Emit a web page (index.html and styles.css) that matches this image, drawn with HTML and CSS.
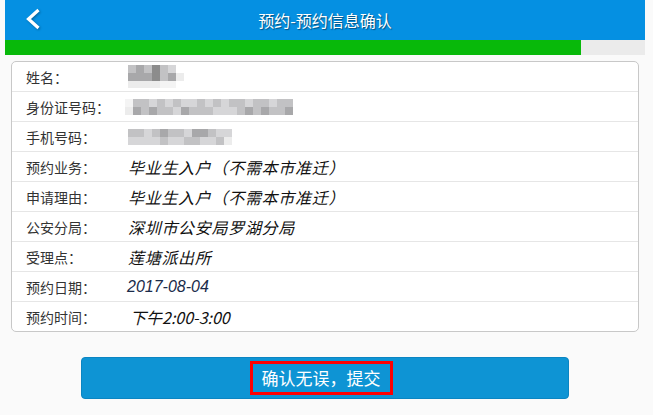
FILE: index.html
```html
<!DOCTYPE html>
<html lang="zh-CN">
<head>
    <meta charset="UTF-8">
    <meta name="viewport" content="width=device-width, initial-scale=1.0">
    <title>预约-预约信息确认</title>
    <link rel="stylesheet" href="styles.css">
</head>
<body>
    <div class="page">
        <div class="header">
            <a class="back" href="#">
                <svg width="18" height="22" viewBox="0 0 18 22">
                    <path d="M14.5 2 L4.5 11 L14.5 20" fill="none" stroke="#fff" stroke-width="3.2"/>
                </svg>
            </a>
            <h1>预约-预约信息确认</h1>
        </div>

        <div class="progress">
            <div class="progress-bar" style="width: 90%"></div>
        </div>

        <div class="info">
            <div class="row">
                <span class="label">姓名：</span>
                <span class="mosaic">
                    <span class="line"><i class="c3"></i><i class="c2"></i><i class="c3"></i><i class="c1"></i><i class="c3"></i><i class="c4"></i></span>
                    <span class="line"><i class="c2"></i><i class="c2"></i><i class="c2"></i><i class="c1"></i><i class="c3"></i><i class="c2"></i><i class="c5"></i></span>
                    <span class="line half"><i class="c5"></i><i class="c5"></i><i class="c5"></i><i class="c5"></i><i class="c6"></i><i class="c6"></i></span>
                </span>
            </div>
            <div class="row">
                <span class="label">身份证号码：</span>
                <span class="mosaic wide">
                    <span class="line"><i class="c6"></i><i class="c3"></i><i class="c3"></i><i class="c4"></i><i class="c3"></i><i class="c4"></i><i class="c3"></i><i class="c4"></i><i class="c4"></i><i class="c3"></i><i class="c4"></i><i class="c3"></i><i class="c4"></i><i class="c3"></i><i class="c3"></i><i class="c4"></i><i class="c3"></i><i class="c3"></i><i class="c4"></i><i class="c3"></i><i class="c3"></i></span>
                    <span class="line"><i class="c5"></i><i class="c2"></i><i class="c3"></i><i class="c2"></i><i class="c3"></i><i class="c3"></i><i class="c4"></i><i class="c2"></i><i class="c3"></i><i class="c3"></i><i class="c3"></i><i class="c4"></i><i class="c4"></i><i class="c4"></i><i class="c3"></i><i class="c2"></i><i class="c3"></i><i class="c2"></i><i class="c3"></i><i class="c3"></i><i class="c2"></i></span>
                </span>
            </div>
            <div class="row">
                <span class="label">手机号码：</span>
                <span class="mosaic">
                    <span class="line"><i class="c3"></i><i class="c3"></i><i class="c4"></i><i class="c3"></i><i class="c2"></i><i class="c3"></i><i class="c3"></i><i class="c4"></i><i class="c2"></i><i class="c2"></i><i class="c3"></i><i class="c4"></i><i class="c4"></i></span>
                    <span class="line"><i class="c4"></i><i class="c4"></i><i class="c4"></i><i class="c4"></i><i class="c3"></i><i class="c4"></i><i class="c4"></i><i class="c3"></i><i class="c3"></i><i class="c4"></i><i class="c4"></i><i class="c3"></i><i class="c5"></i></span>
                </span>
            </div>
            <div class="row">
                <span class="label">预约业务：</span>
                <span class="value">毕业生入户（不需本市准迁）</span>
            </div>
            <div class="row">
                <span class="label">申请理由：</span>
                <span class="value">毕业生入户（不需本市准迁）</span>
            </div>
            <div class="row">
                <span class="label">公安分局：</span>
                <span class="value">深圳市公安局罗湖分局</span>
            </div>
            <div class="row">
                <span class="label">受理点：</span>
                <span class="value">莲塘派出所</span>
            </div>
            <div class="row">
                <span class="label">预约日期：</span>
                <span class="value date">2017-08-04</span>
            </div>
            <div class="row">
                <span class="label">预约时间：</span>
                <span class="value time">下午2:00-3:00</span>
            </div>
        </div>

        <div class="actions">
            <button class="submit"><span class="focus">确认无误，提交</span></button>
        </div>
    </div>
</body>
</html>
```

FILE: styles.css
```css
body {
    margin: 0;
    background-color: #fafafa;
    font-family: "Noto Sans CJK SC", "Liberation Sans", sans-serif;
    color: #222;
}
.page {
    width: 640px;
    margin-left: 5px;
}
.header {
    height: 40px;
    background-color: #0590e2;
    display: flex;
    align-items: center;
    justify-content: center;
    position: relative;
}
.header h1 {
    margin: 0;
    font-size: 16px;
    font-weight: normal;
    color: #fff;
    text-shadow: 1px 1px 1px rgba(0, 0, 0, 0.45);
}
.back {
    position: absolute;
    left: 19px;
    top: 8px;
    display: flex;
    filter: drop-shadow(1px 1px 1px rgba(0, 0, 0, 0.3));
}
.progress {
    height: 15px;
    background-color: #ebebeb;
}
.progress-bar {
    height: 100%;
    background-color: #08b90a;
}
.info {
    margin: 6px 6px 0;
    background-color: #fff;
    border: 1px solid #c8c8c8;
    border-radius: 5px;
}
.row {
    height: 29px;
    display: flex;
    align-items: center;
    padding-left: 14px;
    border-top: 1px solid #e6e6e6;
    font-size: 14px;
}
.row:first-child {
    border-top: none;
}
.label {
    width: 102px;
    color: #333;
}
.value {
    font-size: 16px;
    font-style: italic;
    letter-spacing: 0.7px;
    color: #111;
}
.date {
    font-family: "Liberation Sans", sans-serif;
    letter-spacing: 0;
    color: #1a2b4a;
    margin-left: -1px;
}
.time {
    letter-spacing: 0;
    margin-left: 2px;
}
.mosaic {
    display: flex;
    flex-direction: column;
}
.mosaic.wide {
    margin-left: -3px;
}
.line {
    display: flex;
}
.line i {
    width: 8px;
    height: 8px;
}
.line.half i {
    height: 7px;
}
.c1 { background-color: #8c8c8c; }
.c2 { background-color: #a8a8aa; }
.c3 { background-color: #c2c2c4; }
.c4 { background-color: #d6d6d8; }
.c5 { background-color: #ececec; }
.c6 { background-color: #f4f4f4; }
.actions {
    display: flex;
    justify-content: center;
    padding-top: 25px;
}
.submit {
    width: 488px;
    height: 42px;
    background-color: #0e94d4;
    border: 1px solid #0b85c2;
    border-radius: 4px;
    padding: 0;
    display: flex;
    align-items: center;
    justify-content: center;
    cursor: pointer;
}
.focus {
    border: 3px solid #f00;
    padding: 2px 9px;
    margin-right: 8px;
    font-family: "Noto Sans CJK SC", sans-serif;
    font-size: 17px;
    line-height: 24px;
    color: #fff;
}
```
